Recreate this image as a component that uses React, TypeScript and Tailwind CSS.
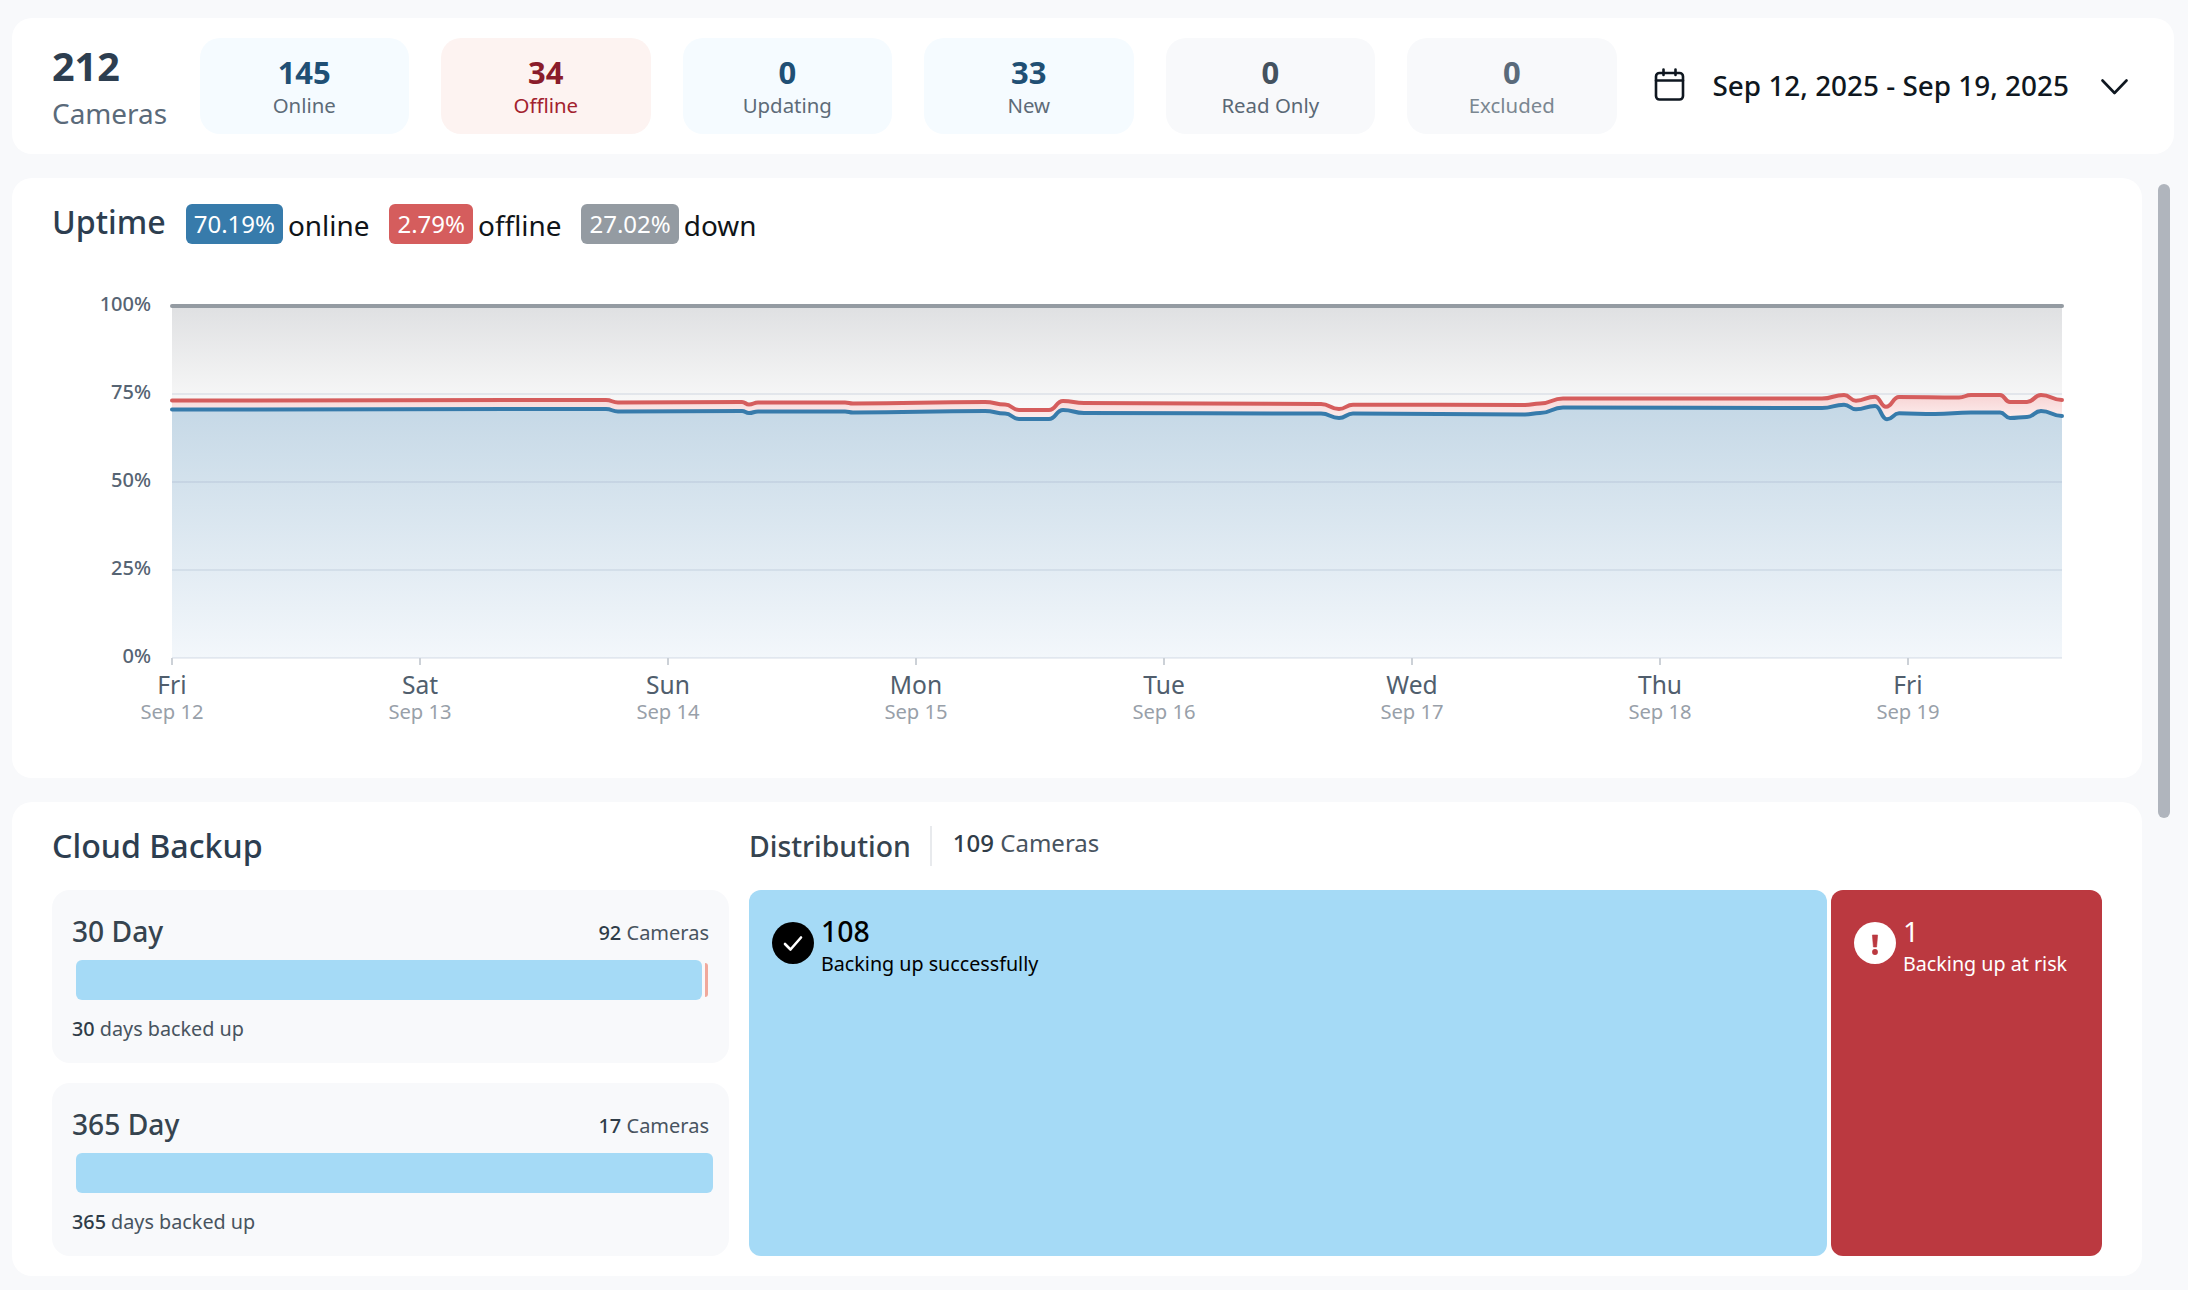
import React from "react";

type P = [number, number];
const RED: P[] = [[172,400.5],[606,400],[618,402.5],[742,402],[749,404.5],[758,402.5],[845,402.5],[853,403.5],[985,402],[1005,404.5],[1019,410],[1049,410],[1063,401],[1084,403],[1321,404],[1339,409],[1353,404.7],[1525,405],[1540,403.5],[1563,398.5],[1822,398.5],[1844,395],[1856,400.7],[1875,396.7],[1886,406.7],[1899,397],[1959,397.5],[1971,395],[2000,395],[2010,402],[2027,402],[2041,395],[2062,400]];
const BLUE: P[] = [[172,409.5],[606,409],[618,411.5],[742,411],[749,413],[758,411.5],[845,411.5],[853,412.5],[985,411],[1005,413.5],[1019,419],[1049,419],[1063,410],[1084,413],[1321,413.5],[1339,418],[1353,413.5],[1525,414.5],[1540,413],[1563,407.5],[1822,408],[1844,404.7],[1856,409.3],[1875,406],[1887,419.3],[1899,413.3],[1935,414],[1971,412.5],[2000,412.5],[2010,418],[2027,417],[2041,411],[2062,416]];

function curve(pts: P[]) {
  let d = "M" + pts[0][0] + " " + pts[0][1];
  for (let i = 1; i < pts.length; i++) {
    const [x0, y0] = pts[i - 1];
    const [x1, y1] = pts[i];
    const m = (x0 + x1) / 2;
    d += " C" + m + " " + y0 + " " + m + " " + y1 + " " + x1 + " " + y1;
  }
  return d;
}

const DAYS = [["Fri","Sep 12"],["Sat","Sep 13"],["Sun","Sep 14"],["Mon","Sep 15"],["Tue","Sep 16"],["Wed","Sep 17"],["Thu","Sep 18"],["Fri","Sep 19"]];
const YS: [string, number][] = [["100%",306],["75%",394],["50%",482],["25%",570],["0%",658]];

function Chart() {
  const red = curve(RED);
  const blue = curve(BLUE);
  return (
    <svg viewBox="52 284 2050 476" className="block w-[2050px] h-[476px]">
      <defs>
        <linearGradient id="g" gradientUnits="userSpaceOnUse" x1="0" y1="306" x2="0" y2="412">
          <stop offset="0" stopColor="#dfe0e2" />
          <stop offset="1" stopColor="#fafafa" />
        </linearGradient>
        <linearGradient id="r" gradientUnits="userSpaceOnUse" x1="0" y1="394" x2="0" y2="420">
          <stop offset="0" stopColor="#f7d2d2" />
          <stop offset="1" stopColor="#fdf0f0" />
        </linearGradient>
        <linearGradient id="b" gradientUnits="userSpaceOnUse" x1="0" y1="405" x2="0" y2="658">
          <stop offset="0" stopColor="#c5d8e6" />
          <stop offset="1" stopColor="#f3f7fb" />
        </linearGradient>
      </defs>
      <rect x="172" y="306" width="1890" height="352" fill="url(#g)" />
      <path d={red + " L2062 658 L172 658 Z"} fill="url(#r)" />
      <path d={blue + " L2062 658 L172 658 Z"} fill="url(#b)" />
      {YS.slice(1).map(([l, y]) => (
        <rect key={l} x="172" y={y - 1} width="1890" height="2" fill="#8296b4" fillOpacity="0.16" />
      ))}
      {YS.map(([l, y]) => (
        <text key={l} x="151" y={y + 5} textAnchor="end" fontSize="20" fontWeight="500" fill="#566473">{l}</text>
      ))}
      <path d="M172 306 L2062 306" stroke="#949ba2" strokeWidth="4" strokeLinecap="round" fill="none" />
      <path d={red} stroke="#d55d5d" strokeWidth="4" strokeLinecap="round" fill="none" />
      <path d={blue} stroke="#377bab" strokeWidth="4" strokeLinecap="round" fill="none" />
      {DAYS.map(([d, s], i) => {
        const x = 172 + 248 * i;
        return (
          <g key={s}>
            <rect x={x - 1} y="658" width="2" height="7" fill="#ccd1d7" />
            <text x={x} y="694" textAnchor="middle" fontSize="24.6" fill="#505e6d">{d}</text>
            <text x={x} y="719" textAnchor="middle" fontSize="20.2" fill="#98a0a9">{s}</text>
          </g>
        );
      })}
    </svg>
  );
}

function Tile({ n, label, bg, nc, lc }: { n: string; label: string; bg: string; nc: string; lc: string }) {
  return (
    <div className={"w-[209.5px] h-24 rounded-[20px] flex flex-col items-center " + bg}>
      <div className={"mt-[13px] h-[42px] leading-[42px] text-[31px] font-bold " + nc}>{n}</div>
      <div className={"h-[28px] leading-[28px] -mt-[2px] text-[20.4px] " + lc}>{label}</div>
    </div>
  );
}

function Chip({ v, label, bg }: { v: string; label: string; bg: string }) {
  return (
    <div className="flex items-center gap-[5px]">
      <span className={"h-10 leading-10 px-2 rounded-md text-white text-[24px] " + bg}>{v}</span>
      <span className="text-[27.9px] leading-10 text-[#101418] mt-[2px]">{label}</span>
    </div>
  );
}

function BackupTile({ title, count, bar, extra, n, unit }: { title: string; count: string; bar: string; extra?: boolean; n: string; unit: string }) {
  return (
    <div className="h-[173px] rounded-[18px] bg-[#f8f9fb] px-5 relative">
      <div className="flex justify-between items-center pt-[12px] h-[70px]">
        <span className="text-[28.2px] font-medium text-[#36444f]">{title}</span>
        <span className="text-[20px] text-[#48545f] mt-[3px]"><span className="font-medium text-[#2f3c48]">{count}</span> Cameras</span>
      </div>
      <div className="ml-1 flex items-center gap-[3px]">
        <div className={"h-10 shrink-0 rounded-md bg-[#a5daf6] " + bar} />
        {extra && <div className="w-[3px] shrink-0 h-[34px] rounded-r-md bg-[#f0a99c]" />}
      </div>
      <div className="mt-[15px] text-[19.8px] leading-[28px] text-[#48545f]"><span className="font-medium text-[#2f3c48]">{n}</span> {unit}</div>
    </div>
  );
}

export default function App() {
  return (
    <div className="w-[2188px] h-[1290px] overflow-hidden bg-[#f8f9fb] pt-[18px] pl-3 font-['Noto_Sans',sans-serif]">
      <div className="w-[2162px] h-[136px] bg-white rounded-[20px] flex items-center pl-10">
        <div className="w-[147.5px] pt-[2px]">
          <div className="text-[39.5px] leading-[50px] font-bold text-[#2d3e50]">212</div>
          <div className="text-[27.9px] leading-[40px] mt-[2px] text-[#5a6a7a]">Cameras</div>
        </div>
        <div className="flex gap-8">
          <Tile n="145" label="Online" bg="bg-[#f5fbff]" nc="text-[#204f74]" lc="text-[#5d6b78]" />
          <Tile n="34" label="Offline" bg="bg-[#fdf3f1]" nc="text-[#8a1c2b]" lc="text-[#a3222e]" />
          <Tile n="0" label="Updating" bg="bg-[#f5fbff]" nc="text-[#204f74]" lc="text-[#5d6b78]" />
          <Tile n="33" label="New" bg="bg-[#f5fbff]" nc="text-[#204f74]" lc="text-[#5d6b78]" />
          <Tile n="0" label="Read Only" bg="bg-[#f8f9fb]" nc="text-[#44525f]" lc="text-[#5a6875]" />
          <Tile n="0" label="Excluded" bg="bg-[#f8f9fb]" nc="text-[#5a6a7a]" lc="text-[#7b8791]" />
        </div>
        <svg viewBox="0 0 30 33" className="ml-[37px] w-[31px] h-[33px] -mt-1 shrink-0" fill="none" stroke="#0f1720" strokeWidth="2.6" strokeLinecap="round">
          <rect x="1.5" y="5" width="27" height="26.5" rx="3.5" />
          <path d="M1.5 12.5H28.5M9 1.5V7M21 1.5V7" />
        </svg>
        <span className="ml-[28px] text-[27.9px] font-medium text-[#0f1720] whitespace-nowrap">Sep 12, 2025 - Sep 19, 2025</span>
        <svg viewBox="0 0 27 16" className="ml-[32px] mt-[2px] w-[27px] h-4 shrink-0" fill="none" stroke="#0f1720" strokeWidth="2.6" strokeLinecap="round" strokeLinejoin="round">
          <path d="M1.5 1.5L13.5 14L25.5 1.5" />
        </svg>
      </div>

      <div className="flex mt-6">
        <div className="w-[2130px] flex flex-col gap-6">
          <div className="h-[600px] bg-white rounded-[20px] px-10 pt-[26px]">
            <div className="flex items-center h-10 gap-[20px]">
              <h2 className="text-[32.2px] leading-10 font-medium text-[#2d3e50] -mt-1">Uptime</h2>
              <Chip v="70.19%" label="online" bg="bg-[#377bab]" />
              <Chip v="2.79%" label="offline" bg="bg-[#d55d5d]" />
              <Chip v="27.02%" label="down" bg="bg-[#949ba2]" />
            </div>
            <div className="mt-[40px]">
              <Chart />
            </div>
          </div>

          <div className="h-[474px] bg-white rounded-[20px] px-10 flex gap-5">
            <div className="w-[677px] shrink-0">
              <h2 className="h-[88px] pt-[24px] text-[32.2px] leading-10 font-medium text-[#2d3e50]">Cloud Backup</h2>
              <div className="flex flex-col gap-5">
                <BackupTile title="30 Day" count="92" bar="w-[626px]" extra n="30" unit="days backed up" />
                <BackupTile title="365 Day" count="17" bar="w-[636.5px]" n="365" unit="days backed up" />
              </div>
            </div>
            <div className="flex-1">
              <div className="h-[88px] flex items-start">
                <h2 className="pt-[24px] text-[28.4px] leading-10 font-medium text-[#36444f]">Distribution</h2>
                <div className="mt-6 ml-[19px] w-[2px] h-10 bg-[#e8eaed]" />
                <div className="pt-[21px] ml-[21px] text-[24px] leading-10 text-[#48545f]"><span className="font-medium text-[#2f3c48]">109</span> Cameras</div>
              </div>
              <div className="h-[366px] flex gap-1">
                <div className="w-[1078px] rounded-[12px] bg-[#a5daf6] flex pt-[23px] pl-[23px] text-black">
                  <svg viewBox="0 0 42 42" className="w-[42px] h-[42px] mt-[9px] shrink-0">
                    <circle cx="21" cy="21" r="21" fill="#000" />
                    <path d="M13 22L18.5 27.5L29 15.5" fill="none" stroke="#fff" strokeWidth="2.6" strokeLinecap="round" strokeLinejoin="round" />
                  </svg>
                  <div className="ml-[7px]">
                    <div className="text-[28.4px] leading-[36px] font-medium">108</div>
                    <div className="text-[19.7px] leading-[28px] mt-[1px]">Backing up successfully</div>
                  </div>
                </div>
                <div className="w-[271px] rounded-[12px] bg-[#bb3940] flex pt-[23px] pl-[23px] text-white">
                  <svg viewBox="0 0 42 42" className="w-[42px] h-[42px] mt-[9px] shrink-0">
                    <circle cx="21" cy="21" r="21" fill="#fff" />
                    <path d="M18.4 13H23.6L22.6 25H19.4Z" fill="#bb3940" stroke="#bb3940" strokeWidth="0.6" strokeLinejoin="round" />
                    <circle cx="21" cy="30" r="2.9" fill="#bb3940" />
                  </svg>
                  <div className="ml-[7px]">
                    <div className="text-[27.9px] leading-[36px]">1</div>
                    <div className="text-[19.7px] leading-[28px] mt-[1px] whitespace-nowrap">Backing up at risk</div>
                  </div>
                </div>
              </div>
            </div>
          </div>
        </div>
        <div className="ml-4 mt-[6px] w-3 h-[634px] rounded-full bg-[#b0b5bd]" />
      </div>
    </div>
  );
}
